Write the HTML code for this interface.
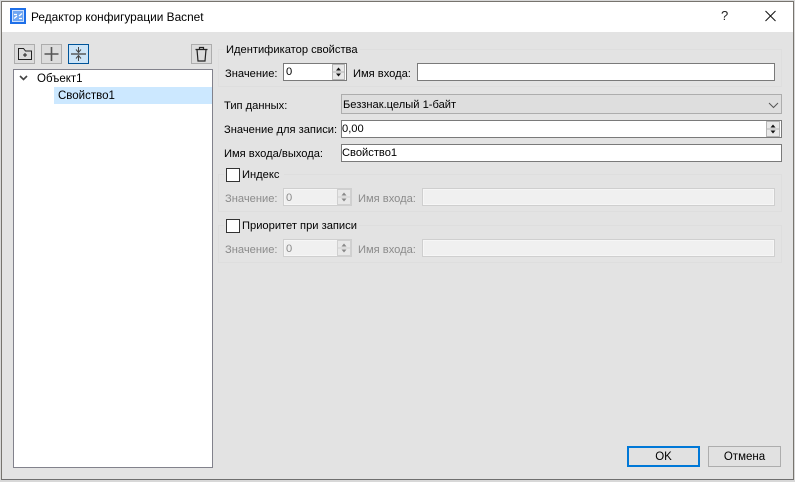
<!DOCTYPE html>
<html><head><meta charset="utf-8"><style>
html,body{margin:0;padding:0}
body{width:795px;height:482px;overflow:hidden;background:#d8d8d8;position:relative;font:11.15px "Liberation Sans",sans-serif;color:#000}
.a{position:absolute;box-sizing:border-box}
.t{position:absolute;white-space:nowrap;line-height:14px;height:14px}
.i{position:absolute;box-sizing:border-box;background:#fff;border:1px solid #7a7a7a;line-height:17px;padding-left:0;white-space:nowrap}
.g{position:absolute;box-sizing:border-box;border:1px solid #dedede}
.d{color:#8b8b8b}
.id{position:absolute;box-sizing:border-box;background:#f0f0f0;border:1px solid #cfcfcf;box-shadow:inset 0 0 0 1px #f6f6f6;color:#8b8b8b;line-height:18px;padding-left:2px}
.cb{position:absolute;box-sizing:border-box;width:14px;height:14px;background:#fff;border:1px solid #333}
.b{position:absolute;box-sizing:border-box;background:#e1e1e1;border:1px solid #adadad;text-align:center;line-height:20px;font-size:11.5px}
.tb{position:absolute;box-sizing:border-box;height:20px;top:44px;border:1px solid #adadad;background:#dcdcdc}
svg{position:absolute;left:0;top:0;display:block}
</style></head><body>
<div class="a" style="left:1px;top:1px;width:793px;height:479px;background:#e3e3e3;border:1px solid #77746e;border-bottom-color:#6f6f6f"></div>
<div class="a" style="left:2px;top:2px;width:791px;height:30px;background:#fff"></div>

<svg style="left:10px;top:8px" width="16" height="16" viewBox="0 0 16 16"><rect width="16" height="16" fill="#1e6fe8"/><rect x="2.500" y="2.500" width="11" height="11" fill="#6fa6f2" stroke="#cfe0fb"/><path d="M4 10.500 L7 8 M9 8 L12 5.500 M4 6.500h3M9 10.500h3" stroke="#fff" stroke-width="1.300" fill="none"/></svg>
<div class="t" style="left:31px;top:10px;font-size:11.85px">Редактор конфигурации Bacnet</div>
<div class="t" style="left:721px;top:9px;font-size:13px;color:#222">?</div>
<svg style="left:765px;top:10px" width="12" height="12"><path d="M.5 1L10.500 11M10.500 1L.5 11" stroke="#111" stroke-width="1" fill="none"/></svg>

<div class="tb" style="left:14px;width:21px"><svg width="19" height="18"><path d="M3.500 14.500V3.500h5l2 2.500h6v8.500z" fill="none" stroke="#222"/><path d="M8 10h4M10 8v4" stroke="#222"/></svg></div>
<div class="tb" style="left:41px;width:21px"><svg width="19" height="18"><path d="M9.500 2v14M2.500 9h14" stroke="#555" stroke-width="1.600"/></svg></div>
<div class="tb" style="left:68px;width:21px;background:#cce4f7;border-color:#005499"><svg width="19" height="18"><path d="M2 9h15" stroke="#444" stroke-width="1.300"/><path d="M9.500 2v5M9.500 11v5M7 4.500L9.500 7.500 12 4.500M7 13.500L9.500 10.500 12 13.500" stroke="#444" fill="none"/></svg></div>
<div class="tb" style="left:191px;width:21px"><svg width="19" height="18"><path d="M3.500 4.500h12M5 4.500l1 11.500h7l1-11.500M7.500 4.500V2.500h4v2" fill="none" stroke="#222" stroke-width="1.200"/></svg></div>

<div class="a" style="left:13px;top:69px;width:200px;height:399px;background:#fff;border:1px solid #82828c"></div>
<div class="a" style="left:54px;top:87px;width:158px;height:17px;background:#cce8ff"></div>
<svg style="left:19px;top:75px" width="9" height="6"><path d="M1 1L4.500 4.500 8 1" fill="none" stroke="#444" stroke-width="1.600"/></svg>
<div class="t" style="left:37px;top:72px;font-size:11.5px">Объект1</div>
<div class="t" style="left:58px;top:89px;font-size:11.5px">Свойство1</div>

<div class="g" style="left:218px;top:49px;width:564px;height:38px"></div>
<div class="t" style="left:224px;top:43px;background:#e3e3e3;padding:0 2px">Идентификатор свойства</div>
<div class="t" style="left:225px;top:67px">Значение:</div>
<div class="i" style="left:283px;top:63px;width:64px;height:18px;padding-left:2px">0</div>
<svg style="left:332px;top:64px" width="14" height="16"><rect x=".5" y=".5" width="12" height="15" fill="#e8e8e8" stroke="#b5b5b5"/><path d="M1 8h11" stroke="#b5b5b5"/><path d="M6.500 3.500L9 6.500H4zM6.500 12.500L9 9.500H4z" fill="#111"/></svg>
<div class="t" style="left:353px;top:67px">Имя входа:</div>
<div class="i" style="left:417px;top:63px;width:358px;height:18px"></div>

<div class="t" style="left:224px;top:99px">Тип данных:</div>
<div class="a" style="left:341px;top:94px;width:441px;height:20px;background:#dedede;border:1px solid #adadad;line-height:20px;padding-left:1px">Беззнак.целый 1-байт</div>
<svg style="left:768px;top:102px" width="11" height="7"><path d="M1 1L5.500 5.500 10 1" fill="none" stroke="#555"/></svg>

<div class="t" style="left:224px;top:123px">Значение для записи:</div>
<div class="i" style="left:341px;top:120px;width:441px;height:18px">0,00</div>
<svg style="left:766px;top:121px" width="14" height="16"><rect x=".5" y=".5" width="13" height="15" fill="#e8e8e8" stroke="#b5b5b5"/><path d="M1 8h12" stroke="#b5b5b5"/><path d="M7 3.500L9.500 6.500H4.500zM7 12.500L9.500 9.500H4.500z" fill="#111"/></svg>
<div class="t" style="left:224px;top:147px">Имя входа/выхода:</div>
<div class="i" style="left:341px;top:144px;width:441px;height:18px">Свойство1</div>

<div class="g" style="left:218px;top:174px;width:564px;height:38px"></div>
<div class="a" style="left:224px;top:166px;width:60px;height:16px;background:#e3e3e3"></div>
<div class="cb" style="left:226px;top:168px"></div>
<div class="t" style="left:242px;top:168px">Индекс</div>
<div class="t d" style="left:225px;top:192px">Значение:</div>
<div class="id" style="left:283px;top:188px;width:69px;height:18px">0</div>
<svg style="left:337px;top:189px" width="14" height="16"><rect x=".5" y=".5" width="13" height="15" fill="#e8e8e8" stroke="#d0d0d0"/><path d="M1 8h12" stroke="#d0d0d0"/><path d="M7 3.500L9.500 6.500H4.500zM7 12.500L9.500 9.500H4.500z" fill="#888"/></svg>
<div class="t d" style="left:358px;top:192px">Имя входа:</div>
<div class="id" style="left:422px;top:188px;width:353px;height:18px"></div>

<div class="g" style="left:218px;top:225px;width:564px;height:38px"></div>
<div class="a" style="left:224px;top:217px;width:135px;height:16px;background:#e3e3e3"></div>
<div class="cb" style="left:226px;top:219px"></div>
<div class="t" style="left:242px;top:219px">Приоритет при записи</div>
<div class="t d" style="left:225px;top:243px">Значение:</div>
<div class="id" style="left:283px;top:239px;width:69px;height:18px">0</div>
<svg style="left:337px;top:240px" width="14" height="16"><rect x=".5" y=".5" width="13" height="15" fill="#e8e8e8" stroke="#d0d0d0"/><path d="M1 8h12" stroke="#d0d0d0"/><path d="M7 3.500L9.500 6.500H4.500zM7 12.500L9.500 9.500H4.500z" fill="#888"/></svg>
<div class="t d" style="left:358px;top:243px">Имя входа:</div>
<div class="id" style="left:422px;top:239px;width:353px;height:18px"></div>

<div class="b" style="left:627px;top:446px;width:73px;height:21px;border:2px solid #0078d7;line-height:18px">OK</div>
<div class="b" style="left:708px;top:446px;width:73px;height:21px">Отмена</div>
</body></html>
